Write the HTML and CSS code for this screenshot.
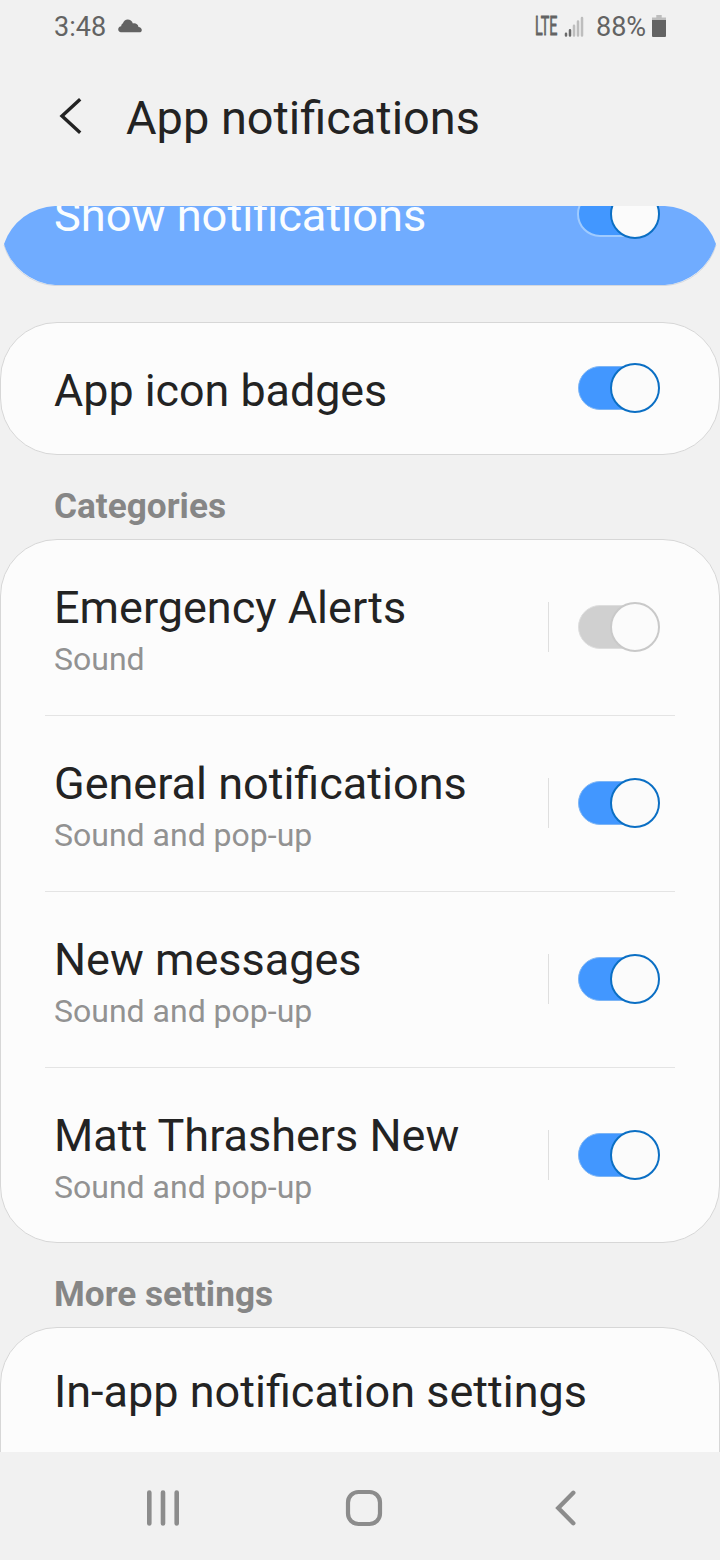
FILE: index.html
```html
<!DOCTYPE html>
<html lang="en">
<head>
<meta charset="utf-8">
<title>App notifications</title>
<link rel="stylesheet" href="styles.css">
</head>
<body>
<div class="screen">
  <div class="status">
    <span class="time">3:48</span>
    <svg class="cloud" width="24" height="14" viewBox="0 0 24 14"><path d="M3 13.2C1.300 13.200 .2 12 .2 10.300S1.400 7.400 3.200 7.200C3.200 5.600 3.900 4.700 4.800 4.400C5.800 2 7.400.5 9.700.5C12 .5 14.200 1.900 14.900 4.400C17.600 3.800 20 5.100 20.500 7.900C22.400 8.100 23.800 9.300 23.800 10.900C23.800 12.300 22.900 13.200 21.400 13.200Z" fill="#636363"/></svg>
    <span class="grow"></span>
    <span class="lte">LTE</span>
    <svg class="signal" width="20" height="22" viewBox="0 0 20 22"><g stroke-width="2.500" stroke-linecap="round"><path d="M2 17.700V19.500M6 14.200V19.500" stroke="#6a6a6a"/><path d="M10 9.700V19.500M14 5.600V19.500M18 2V19.500" stroke="#bdbdbd"/></g></svg>
    <span class="percent">88%</span>
    <svg class="battery" width="14" height="22" viewBox="0 0 14 22"><path d="M4.300 0H9.700V2.500H14V5.500H0V2.500H4.300Z" fill="#bdbdbd"/><path d="M0 5H14V21Q14 22 13 22H1Q0 22 0 21Z" fill="#636363"/></svg>
  </div>
  <header class="header">
    <svg class="back" width="24" height="38" viewBox="0 0 24 38"><path d="M21.200 2.200L3 19L21.200 35.800" fill="none" stroke="#232323" stroke-width="3.400"/></svg>
    <h1 class="title">App notifications</h1>
  </header>
  <main class="content">
    <section class="master">
      <svg class="master-shape" width="720" height="80" viewBox="0 0 720 80"><path d="M4 39A56 56 0 0 0 54 79.500H666A56 56 0 0 0 716 39" fill="#fcfcfc" stroke="#d4d8de"/><path d="M55 0H665A56 56 0 0 1 716 38A57 57 0 0 1 665 79H55A57 57 0 0 1 4 38A56 56 0 0 1 55 0Z" fill="#70acff"/></svg>
      <span class="label master-label">Show notifications</span>
      <span class="toggle on outlined master-toggle"><i class="thumb"></i></span>
    </section>
    <section class="card single">
      <span class="label">App icon badges</span>
      <span class="toggle on"><i class="thumb"></i></span>
    </section>
    <h2 class="section">Categories</h2>
    <section class="card">
      <div class="row">
        <div class="texts"><span class="label">Emergency Alerts</span><span class="sub">Sound</span></div>
        <i class="bar"></i><span class="toggle off"><i class="thumb"></i></span>
      </div>
      <div class="row">
        <div class="texts"><span class="label">General notifications</span><span class="sub">Sound and pop-up</span></div>
        <i class="bar"></i><span class="toggle on"><i class="thumb"></i></span>
      </div>
      <div class="row">
        <div class="texts"><span class="label">New messages</span><span class="sub">Sound and pop-up</span></div>
        <i class="bar"></i><span class="toggle on"><i class="thumb"></i></span>
      </div>
      <div class="row">
        <div class="texts"><span class="label">Matt Thrashers New</span><span class="sub">Sound and pop-up</span></div>
        <i class="bar"></i><span class="toggle on"><i class="thumb"></i></span>
      </div>
    </section>
    <h2 class="section">More settings</h2>
    <section class="card last">
      <span class="label">In-app notification settings</span>
    </section>
  </main>
  <nav class="nav">
    <svg width="34" height="36" viewBox="0 0 34 36"><path d="M3.300 2.500V33.500M17 2.500V33.500M30.700 2.500V33.500" stroke="#8c8c8c" stroke-width="4.600" stroke-linecap="round"/></svg>
    <svg class="home" width="38" height="38" viewBox="0 0 38 38"><rect x="3" y="3" width="32" height="32" rx="10.500" fill="none" stroke="#8c8c8c" stroke-width="4.200"/></svg>
    <svg width="22" height="36" viewBox="0 0 22 36"><path d="M18.300 2.800L3.300 18L18.300 33.200" fill="none" stroke="#8c8c8c" stroke-width="4.400" stroke-linecap="round"/></svg>
  </nav>
</div>
</body>
</html>
```

FILE: styles.css
```css
*, *::before { box-sizing: border-box; }
body { margin: 0; background: #f1f1f1; font-family: Roboto, "Liberation Sans", sans-serif; color: #232323; }
svg { display: block; flex: none; }
.screen { width: 720px; height: 1560px; display: flex; flex-direction: column; overflow: hidden; }
.status { height: 54px; flex: none; display: flex; padding: 0 54px; color: #636363; font-size: 27px; line-height: 54px; white-space: nowrap; }
.time { width: 64px; }
.cloud { margin-top: 19px; }
.grow { flex: 1; }
.lte { width: 29.5px; font-size: 26px; line-height: 52px; transform: scaleX(.55); transform-origin: 0 50%; -webkit-text-stroke: .8px #636363; }
.signal { margin-top: 16px; }
.percent { width: 56px; margin-left: 12px; }
.battery { margin-top: 15px; }
.header { height: 152px; flex: none; display: flex; padding-left: 59px; }
.back { margin-top: 43px; }
.title { margin: 0 0 0 43px; font-size: 46.9px; font-weight: 400; line-height: 56px; padding-top: 36px; white-space: nowrap; }
.content { height: 1246px; flex: none; overflow: hidden; }
.master { position: relative; height: 80px; margin-bottom: 36px; overflow: hidden; }
.master-shape { position: absolute; left: 0; top: 0; }
.label { font-size: 45px; line-height: 54px; white-space: nowrap; }
.master-label { position: absolute; left: 54px; top: -17px; color: #fafdff; font-size: 45.2px; }
.card { background: #fcfcfc; border: 1px solid #d7d7d7; border-radius: 57px; }
.single { height: 133px; padding: 0 59px 0 53px; display: flex; align-items: center; justify-content: space-between; }
.single .label { padding-top: 5px; font-size: 44.8px; }
.single .toggle { margin-bottom: 2px; }
.toggle { position: relative; width: 82px; height: 50px; flex: none; }
.toggle::before { content: ""; position: absolute; left: 0; top: 3px; width: 70px; height: 44px; border-radius: 22px; }
.on::before { background: #4297ff; border: 1px solid #7db5f5; }
.off::before { background: #d0d0d0; border: 1px solid #dedede; }
.outlined::before { left: -1px; top: 2px; width: 72px; height: 46px; border: 2px solid #9fcbff; border-radius: 23px; }
.thumb { position: absolute; right: 0; top: 0; width: 50px; height: 50px; border-radius: 50%; background: #fbfbfb; border: 2px solid #0b6fc4; }
.off .thumb { border-color: #c9c9c9; }
.master-toggle { position: absolute; left: 578px; top: -17px; }
.section { margin: 0; height: 84px; padding: 30px 54px 0; font-size: 35.2px; line-height: 42px; font-weight: 700; color: #868686; }
.row { height: 176px; margin: 0 44px; padding: 0 15px 1px 9px; border-bottom: 1px solid #e4e4e4; display: flex; align-items: center; }
.row:last-child { height: 174px; padding-bottom: 0; border-bottom: 0; }
.texts { flex: 1; display: flex; flex-direction: column; padding-top: 6px; }
.row:last-child .texts { padding-top: 5px; }
.sub { font-size: 32px; line-height: 40px; margin-top: 4px; color: #929292; }
.bar { width: 1px; height: 50px; background: #dfdfdf; margin-right: 29px; }
.last { height: 300px; padding: 37px 53px; }
.last .label { display: block; }
.nav { height: 108px; flex: none; display: flex; align-items: center; padding: 4px 143px 0 146px; justify-content: space-between; }
.home { margin: 0 4px 0 -4px; }
```
